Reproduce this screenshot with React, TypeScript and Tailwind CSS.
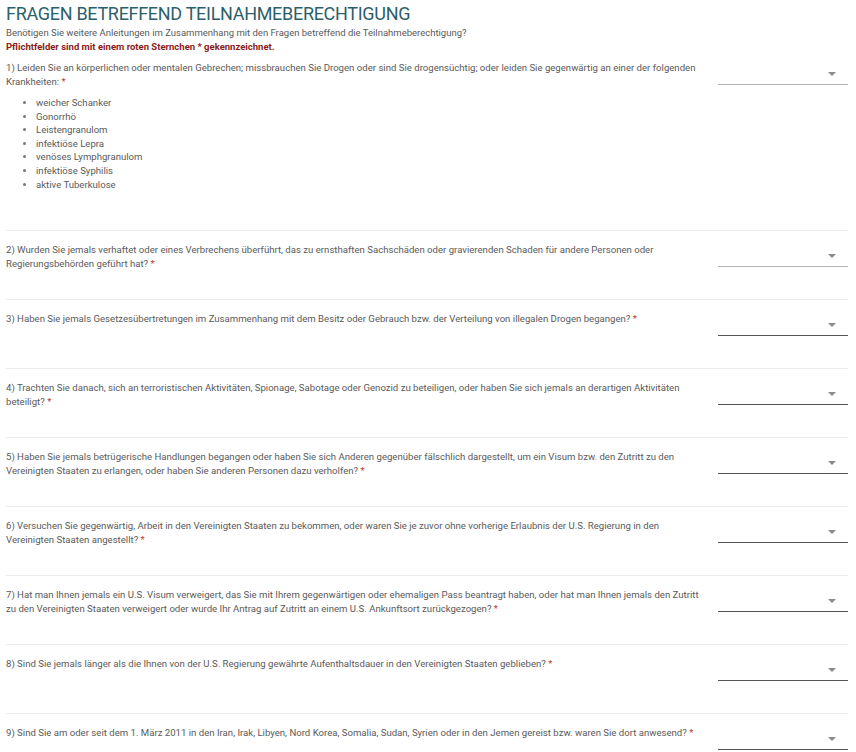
import React from "react";

const diseases = [
  "weicher Schanker",
  "Gonorrhö",
  "Leistengranulom",
  "infektiöse Lepra",
  "venöses Lymphgranulom",
  "infektiöse Syphilis",
  "aktive Tuberkulose",
];

const questions = [
  "2) Wurden Sie jemals verhaftet oder eines Verbrechens überführt, das zu ernsthaften Sachschäden oder gravierenden Schaden für andere Personen oder Regierungsbehörden geführt hat?",
  "3) Haben Sie jemals Gesetzesübertretungen im Zusammenhang mit dem Besitz oder Gebrauch bzw. der Verteilung von illegalen Drogen begangen?",
  "4) Trachten Sie danach, sich an terroristischen Aktivitäten, Spionage, Sabotage oder Genozid zu beteiligen, oder haben Sie sich jemals an derartigen Aktivitäten beteiligt?",
  "5) Haben Sie jemals betrügerische Handlungen begangen oder haben Sie sich Anderen gegenüber fälschlich dargestellt, um ein Visum bzw. den Zutritt zu den Vereinigten Staaten zu erlangen, oder haben Sie anderen Personen dazu verholfen?",
  "6) Versuchen Sie gegenwärtig, Arbeit in den Vereinigten Staaten zu bekommen, oder waren Sie je zuvor ohne vorherige Erlaubnis der U.S. Regierung in den Vereinigten Staaten angestellt?",
  "7) Hat man Ihnen jemals ein U.S. Visum verweigert, das Sie mit Ihrem gegenwärtigen oder ehemaligen Pass beantragt haben, oder hat man Ihnen jemals den Zutritt zu den Vereinigten Staaten verweigert oder wurde Ihr Antrag auf Zutritt an einem U.S. Ankunftsort zurückgezogen?",
  "8) Sind Sie jemals länger als die Ihnen von der U.S. Regierung gewährte Aufenthaltsdauer in den Vereinigten Staaten geblieben?",
  "9) Sind Sie am oder seit dem 1. März 2011 in den Iran, Irak, Libyen, Nord Korea, Somalia, Sudan, Syrien oder in den Jemen gereist bzw. waren Sie dort anwesend?",
];

function Select({ light }: { light?: boolean }) {
  return (
    <div
      className={`w-[130px] h-[24px] shrink-0 flex items-center justify-end pr-[12px] pt-[2px] border-b ${
        light ? "border-[#b5b5b5]" : "border-[#555]"
      }`}
    >
      <svg width="8" height="4" viewBox="0 0 8 4">
        <path d="M0 0 L8 0 L4 4 Z" fill="#8a8a8a" />
      </svg>
    </div>
  );
}

export default function App() {
  return (
    <div className="w-[856px] min-h-[752px] bg-white pl-[6px] pr-[8px] font-['Roboto',sans-serif] text-[#5a5a5a]">
      <h1 className="pt-[3px] text-[18px] leading-[22px] text-[#2c5f6c] tracking-[-0.3px]">
        FRAGEN BETREFFEND TEILNAHMEBERECHTIGUNG
      </h1>
      <p className="mt-[1px] text-[9.5px] leading-[14px]">
        Benötigen Sie weitere Anleitungen im Zusammenhang mit den Fragen betreffend die Teilnahmeberechtigung?
      </p>
      <p className="text-[9.5px] leading-[14px] font-bold text-[#8a1c1c]">
        Pflichtfelder sind mit einem roten Sternchen * gekennzeichnet.
      </p>

      <div className="flex justify-between h-[176px] pt-[7px]">
        <div className="w-[700px] text-[9.6px] leading-[14px]">
          <p>
            1) Leiden Sie an körperlichen oder mentalen Gebrechen; missbrauchen Sie Drogen oder sind Sie drogensüchtig; oder leiden Sie gegenwärtig an einer der folgenden Krankheiten: <span className="text-[#c0392b]">*</span>
          </p>
          <ul className="mt-[7px] pl-[30px] list-disc leading-[13.6px] marker:text-[#777]">
            {diseases.map((d) => (
              <li key={d}>{d}</li>
            ))}
          </ul>
        </div>
        <Select light />
      </div>

      {questions.map((q, i) => (
        <div key={q} className="flex justify-between h-[69px] pt-[12px] border-t border-[#ececec]">
          <p className="w-[700px] text-[9.6px] leading-[14px]">
            {q} <span className="text-[#c0392b]">*</span>
          </p>
          <Select light={i === 0} />
        </div>
      ))}
    </div>
  );
}
